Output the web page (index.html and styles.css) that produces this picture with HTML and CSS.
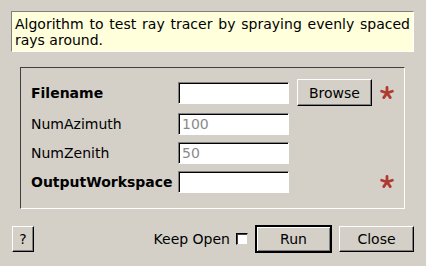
FILE: index.html
```html
<!DOCTYPE html>
<html lang="en">
<head>
    <meta charset="UTF-8">
    <title>RayTracerTester</title>
    <link rel="stylesheet" href="styles.css">
</head>
<body>

    <div class="dialog">
        <!-- Algorithm summary -->
        <div class="summary">Algorithm to test ray tracer by spraying evenly spaced rays around.</div>

        <!-- Properties -->
        <div class="group">
            <label class="prop-label required">Filename</label>
            <input type="text" class="field">
            <button class="btn">Browse</button>
            <span class="star">
                <svg width="14" height="14" viewBox="0 0 15 15">
                    <g stroke="#b03a2e" stroke-width="3" stroke-linecap="round">
                        <line x1="7.5" y1="7.5" x2="7.5" y2="1.5"/>
                        <line x1="7.5" y1="7.5" x2="13.2" y2="5.6"/>
                        <line x1="7.5" y1="7.5" x2="11" y2="12.4"/>
                        <line x1="7.5" y1="7.5" x2="4" y2="12.4"/>
                        <line x1="7.5" y1="7.5" x2="1.8" y2="5.6"/>
                    </g>
                </svg>
            </span>

            <label class="prop-label">NumAzimuth</label>
            <input type="text" class="field" placeholder="100">
            <span></span>
            <span></span>

            <label class="prop-label">NumZenith</label>
            <input type="text" class="field" placeholder="50">
            <span></span>
            <span></span>

            <label class="prop-label required">OutputWorkspace</label>
            <input type="text" class="field">
            <span></span>
            <span class="star">
                <svg width="14" height="14" viewBox="0 0 15 15">
                    <g stroke="#b03a2e" stroke-width="3" stroke-linecap="round">
                        <line x1="7.5" y1="7.5" x2="7.5" y2="1.5"/>
                        <line x1="7.5" y1="7.5" x2="13.2" y2="5.6"/>
                        <line x1="7.5" y1="7.5" x2="11" y2="12.4"/>
                        <line x1="7.5" y1="7.5" x2="4" y2="12.4"/>
                        <line x1="7.5" y1="7.5" x2="1.8" y2="5.6"/>
                    </g>
                </svg>
            </span>
        </div>

        <!-- Dialog buttons -->
        <div class="footer">
            <button class="btn help-btn">?</button>
            <div class="spacer"></div>
            <label class="keep-open">Keep Open <span class="check"></span></label>
            <button class="btn run-btn">Run</button>
            <button class="btn close-btn">Close</button>
        </div>
    </div>

</body>
</html>
```

FILE: styles.css
```css
body {
    margin: 0;
    background: #d4d0c8;
    font-family: "DejaVu Sans", sans-serif;
    font-size: 14px;
    color: #000;
}

.dialog {
    width: 426px;
    height: 266px;
    overflow: hidden;
}

.summary {
    margin: 11px 12px 0 11px;
    height: 33px;
    padding: 4px 3px 2px 3px;
    background: #ffffdc;
    border: 1px solid;
    border-color: #808080 #ffffff #ffffff #808080;
    line-height: 16px;
    text-align: justify;
}

.group {
    margin: 15px 21px 0 20px;
    height: 129px;
    padding: 11px 0 0 10px;
    border: 1px solid;
    border-color: #404040 #ffffff #ffffff #404040;
    display: grid;
    grid-template-columns: 139px 111px 75px 14px;
    grid-template-rows: 27px 22px 22px 22px;
    column-gap: 8px;
    row-gap: 7px;
    align-items: center;
    align-content: start;
}

.prop-label {
    white-space: nowrap;
}

.prop-label.required {
    font-weight: bold;
}

.field {
    box-sizing: border-box;
    width: 111px;
    height: 22px;
    padding: 0 3px;
    font-family: inherit;
    font-size: 14px;
    background: #fff;
    border: 1px solid;
    border-color: #808080 #ffffff #ffffff #808080;
    box-shadow: inset 1px 1px 0 #000;
    outline: none;
}

.field::placeholder {
    color: #8a8a8a;
}

.btn {
    box-sizing: border-box;
    height: 27px;
    font-family: inherit;
    font-size: 14px;
    color: #000;
    background: #d4d0c8;
    border: 1px solid;
    border-color: #ffffff #000000 #000000 #ffffff;
    box-shadow: inset -1px -1px 0 #808080;
    padding: 0;
}

.group .btn {
    width: 75px;
}

.star {
    display: flex;
    align-items: center;
}

.footer {
    margin-top: 16px;
    padding: 0 12px;
    display: flex;
    align-items: center;
    height: 28px;
}

.spacer {
    flex: 1;
}

.help-btn {
    width: 22px;
    height: 26px;
}

.keep-open {
    display: flex;
    align-items: center;
    gap: 6px;
    margin-right: 7px;
}

.check {
    width: 12px;
    height: 12px;
    box-sizing: border-box;
    background: #fff;
    border: 1px solid;
    border-color: #000 #d4d0c8 #d4d0c8 #000;
    box-shadow: inset 1px 1px 0 #404040;
}

.run-btn {
    width: 77px;
    height: 28px;
    border: 2px solid #000;
    box-shadow: inset 1px 1px 0 #fff, inset -1px -1px 0 #808080;
    margin-right: 7px;
}

.close-btn {
    width: 75px;
    height: 26px;
}
```
